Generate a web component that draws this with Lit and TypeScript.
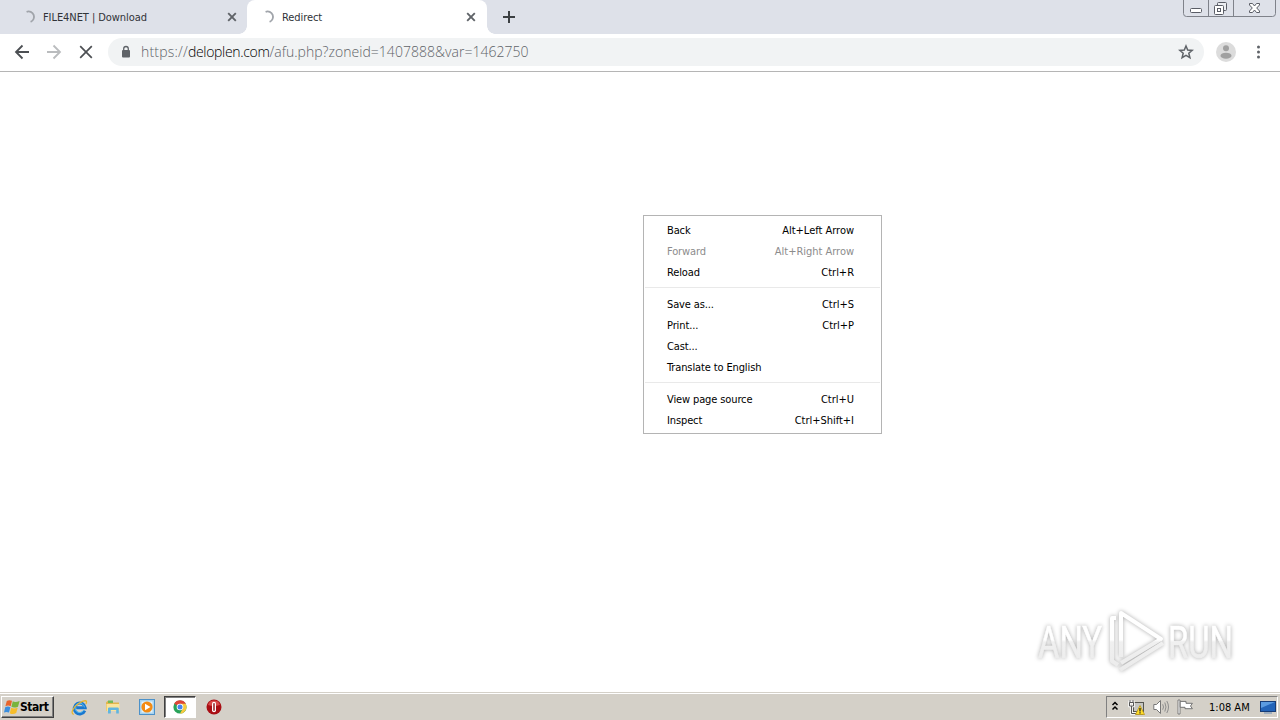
import { LitElement, html, css, svg, nothing } from 'lit';
import { customElement, property } from 'lit/decorators.js';
import { classMap } from 'lit/directives/class-map.js';

interface MenuEntry {
  label: string;
  keys?: string;
  disabled?: boolean;
}

const MENU: MenuEntry[][] = [
  [
    { label: 'Back', keys: 'Alt+Left Arrow' },
    { label: 'Forward', keys: 'Alt+Right Arrow', disabled: true },
    { label: 'Reload', keys: 'Ctrl+R' },
  ],
  [
    { label: 'Save as...', keys: 'Ctrl+S' },
    { label: 'Print...', keys: 'Ctrl+P' },
    { label: 'Cast...' },
    { label: 'Translate to English' },
  ],
  [
    { label: 'View page source', keys: 'Ctrl+U' },
    { label: 'Inspect', keys: 'Ctrl+Shift+I' },
  ],
];

@customElement('browser-tab')
class BrowserTab extends LitElement {
  @property() label = '';
  @property({ type: Boolean, reflect: true }) active = false;

  static styles = css`
    :host {
      display: flex;
      align-items: center;
      box-sizing: border-box;
      width: 247px;
      height: 34px;
      padding: 0 9px 0 22px;
      color: #303338;
      font: 11px 'DejaVu Sans Condensed', 'DejaVu Sans', sans-serif;
      letter-spacing: -0.07px;
    }
    :host([active]) {
      width: 240px;
      padding: 0 10px 0 14px;
      background: #fff;
      border-radius: 8px 8px 0 0;
      position: relative;
    }
    /* curved feet of the selected tab */
    :host([active])::before,
    :host([active])::after {
      content: '';
      position: absolute;
      bottom: 0;
      width: 8px;
      height: 8px;
    }
    :host([active])::before {
      left: -8px;
      background: radial-gradient(circle at 0 0, #dee1e9 7.5px, #fff 8px);
    }
    :host([active])::after {
      right: -8px;
      background: radial-gradient(circle at 100% 0, #dee1e9 7.5px, #fff 8px);
    }
    .label {
      flex: 1;
      margin-left: 6px;
      white-space: nowrap;
    }
    svg {
      display: block;
    }
  `;

  render() {
    return html`
      <svg width="15" height="16" viewBox="0 0 15 16" fill="none" stroke="#a0a4aa" stroke-width="1.8">
        <path d="M4.6 2.8A5.4 5.4 0 1 1 8.6 12.9" />
      </svg>
      <span class="label">${this.label}</span>
      <svg width="12" height="12" viewBox="0 0 12 12" stroke="#5f6368" stroke-width="1.9">
        <path d="M2.2 2.2L9.8 9.8M9.8 2.2L2.2 9.8" />
      </svg>
    `;
  }
}

@customElement('context-menu')
class ContextMenu extends LitElement {
  static styles = css`
    :host {
      display: block;
      box-sizing: border-box;
      width: 239px;
      height: 219px;
      padding: 4px 0;
      background: #fff;
      border: 1px solid #b4b4b4;
      color: #000;
      font: 11px 'DejaVu Sans Condensed', 'DejaVu Sans', sans-serif;
      letter-spacing: -0.12px;
    }
    .item {
      display: flex;
      justify-content: space-between;
      height: 21px;
      line-height: 21px;
      padding: 0 27px 0 23px;
    }
    .keys {
      letter-spacing: -0.02px;
    }
    .disabled {
      color: #8c8c8c;
    }
    .separator {
      height: 1px;
      margin: 4px 1px 6px;
      background: #e9e9e9;
    }
  `;

  render() {
    return MENU.map(
      (group, i) => html`
        ${i ? html`<div class="separator"></div>` : nothing}
        ${group.map(
          (item) => html`
            <div class=${classMap({ item: true, disabled: !!item.disabled })}>
              <span>${item.label}</span><span class="keys">${item.keys ?? ''}</span>
            </div>
          `
        )}
      `
    );
  }
}

@customElement('task-bar')
class TaskBar extends LitElement {
  static styles = css`
    :host {
      display: flex;
      box-sizing: border-box;
      height: 28px;
      padding: 3px 2px 1px 1px;
      background: #d4d0c8;
      border-top: 1px solid #d4d0c8;
      box-shadow: inset 0 1px #fff;
      color: #000;
      font: 11px 'DejaVu Sans Condensed', 'DejaVu Sans', sans-serif;
    }
    svg {
      display: block;
      flex: none;
    }
    .start {
      display: flex;
      align-items: center;
      box-sizing: border-box;
      width: 53px;
      height: 22px;
      padding-left: 2px;
      border: 1px solid;
      border-color: #fff #404040 #404040 #fff;
      box-shadow: inset -1px -1px #808080;
      font-weight: bold;
      font-size: 12px;
      letter-spacing: -0.45px;
    }
    .apps {
      display: flex;
      gap: 1.7px;
      margin-left: 9.4px;
    }
    .app {
      display: flex;
      align-items: center;
      justify-content: center;
      box-sizing: border-box;
      width: 32px;
      height: 22px;
    }
    .running {
      background: #fff;
      border: 1px solid;
      border-color: #404040 #fff #fff #404040;
      box-shadow: inset 1px 1px #808080;
    }
    .tray {
      display: flex;
      align-items: center;
      box-sizing: border-box;
      width: 172px;
      height: 22px;
      margin-left: auto;
      padding-left: 4px;
      border: 1px solid;
      border-color: #808080 #fff #fff #808080;
    }
    .icons {
      display: flex;
      align-items: center;
      gap: 7px;
      width: 98px;
    }
    .icons svg:first-child {
      margin-right: 2px;
    }
    .clock {
      width: 51px;
      white-space: nowrap;
    }
  `;

  render() {
    return html`
      <div class="start">
        <svg width="16" height="16" viewBox="0 0 16 16">
          <path d="M2.8 2Q5 .5 8 1.8L6.7 7.2Q4 6 1.4 7.3Z" fill="#e8642a" />
          <path d="M8.8 2.3Q11 4 15.6 2L14 7.7Q10 9.4 7.4 7.8Z" fill="#79b43c" />
          <path d="M1.2 8.2Q4 7 6.4 8.2L5 13.6Q2.5 12.3 0 13.4Z" fill="#3b8ede" />
          <path d="M7.2 8.8Q10 10.3 13.7 8.7L12.2 14Q9 16 5.8 14.2Z" fill="#f6bd2b" />
        </svg>
        <span>Start</span>
      </div>
      <div class="apps">
        <div class="app">
          <svg width="17" height="17" viewBox="0 0 17 17" fill="none">
            <path d="M13.8 11.6A5.5 5.5 0 1 1 14.2 8.8H5.2" stroke="#1a78cf" stroke-width="3" />
            <path d="M12.8 11.2A4.7 4.7 0 1 1 13.4 8.4" stroke="#55bdf0" stroke-width="1" />
            <path d="M2.8 15.4C-1 14.7 2 8 8 4.2C13 1 17 .6 15 5" stroke="#e8b62f" stroke-width="1.3" />
          </svg>
        </div>
        <div class="app">
          <svg width="16" height="16" viewBox="0 0 16 16">
            <path d="M1 3.5L2.5 2H6L7 3.4H14V12H1Z" fill="#e2b54c" />
            <path d="M3 1.5H8V4H3Z" fill="#74b956" />
            <path d="M1.5 5H14.5V12H1.5Z" fill="#fae49b" />
            <path d="M3 14.5V9.5Q3 8.4 4.2 8.4H12.6Q13.8 8.4 13.8 9.5V14.5H11.2V11H5.8V14.5Z" fill="#61b5df" />
          </svg>
        </div>
        <div class="app">
          <svg width="16" height="16" viewBox="0 0 16 16">
            <rect x=".5" y=".5" width="15" height="15" fill="#a7d3ef" stroke="#4c91c9" />
            <rect x="2.5" y="2.5" width="11" height="11" fill="#e6f3fa" />
            <circle cx="8" cy="8" r="5.6" fill="#f38b13" />
            <path d="M6 4.7L11.5 8L6 11.3Z" fill="#fff" />
          </svg>
        </div>
        <div class="app running">
          <svg width="14" height="14" viewBox="0 0 14 14">
            <circle cx="7" cy="7" r="6.6" fill="#29a35a" />
            <path d="M7 7L1.25 3.7A6.6 6.6 0 0 1 12.75 3.7Z" fill="#df4537" />
            <path d="M7 3.7H12.7A6.6 6.6 0 0 1 7 13.6L9.8 8.6Z" fill="#f8ca3e" />
            <circle cx="7" cy="7" r="3.3" fill="#fff" />
            <circle cx="7" cy="7" r="2.5" fill="#4585ee" />
          </svg>
        </div>
        <div class="app">
          <svg width="16" height="16" viewBox="0 0 16 16">
            <circle cx="8" cy="8" r="7.5" fill="#a90e14" />
            <path d="M2 6A6.3 6.3 0 0 1 14 6Q8 8 2 6Z" fill="#d94a49" />
            <rect x="6" y="2.8" width="4" height="10.4" rx="2" fill="#fff" />
            <rect x="7.3" y="4" width="1.4" height="8" rx=".7" fill="#8d0c12" />
          </svg>
        </div>
      </div>
      <div class="tray">
        <div class="icons">
          <svg width="8" height="12" viewBox="0 0 8 12" fill="none" stroke="#000" stroke-width="1.5">
            <path d="M1.5 4L4 1.5L6.5 4M1.5 8.5L4 6L6.5 8.5" />
          </svg>
          <svg width="18" height="17" viewBox="0 0 18 17" fill="none">
            <rect x="5.5" y="3.5" width="10" height="9" fill="#c6c6c2" stroke="#55554f" />
            <path d="M7 15.5H15" stroke="#777" />
            <path d="M2 1V4M5 1V4M1.5 3.5H5.5V7H1.5ZM3.5 7V14.5H8" stroke="#fff" stroke-width="2.4" />
            <path d="M2 1V4M5 1V4M1.5 3.5H5.5V7H1.5ZM3.5 7V14.5H8" stroke="#555" />
            <path d="M12 6.5L16.5 15.5H7.5Z" fill="#ffdc28" stroke="#b9951b" stroke-width=".8" />
            <path d="M12 9V12.4M12 13.2V14.5" stroke="#222" stroke-width="1.3" />
          </svg>
          <svg width="17" height="16" viewBox="0 0 17 16" fill="none">
            <path d="M.8 5.5H3.5L7.5 1.5V14.5L3.5 10.5H.8Z" fill="#fff" stroke="#777" />
            <path d="M9.7 5.3Q11.3 8 9.7 10.7M11.8 3.5Q14.2 8 11.8 12.5M13.8 2Q17.2 8 13.8 14" stroke="#8d8d8d" />
          </svg>
          <svg width="17" height="16" viewBox="0 0 17 16">
            <path d="M1 1H3V15H1Z" fill="#fff" stroke="#666" stroke-width=".8" />
            <path d="M3.2 2.4H9V4.3H15.4L13.5 7L15.4 9.7H8V8.3H3.2Z" fill="#fff" stroke="#666" stroke-width=".9" />
          </svg>
        </div>
        <span class="clock">1:08 AM</span>
        <svg width="16" height="16" viewBox="0 0 16 16">
          <rect x=".5" y="2.5" width="15" height="10" fill="#2364b8" stroke="#173c76" />
          <path d="M1 3H15L1 9Z" fill="#5b9be0" />
          <path d="M4 14H12" stroke="#6a8cb5" />
        </svg>
      </div>
    `;
  }
}

@customElement('app-root')
class AppRoot extends LitElement {
  static styles = css`
    :host {
      display: flex;
      flex-direction: column;
      width: 1280px;
      height: 720px;
      overflow: hidden;
      background: #fff;
      position: relative;
    }
    svg {
      display: block;
      flex: none;
    }
    .tabs {
      display: flex;
      height: 34px;
      background: #dee1e9;
    }
    .new-tab {
      margin: 10px 0 0 15px;
    }
    .caption {
      margin-left: auto;
      margin-right: 4px;
    }
    .toolbar {
      display: flex;
      align-items: center;
      box-sizing: border-box;
      height: 38px;
      padding: 0 14px 1px;
      border-bottom: 1px solid #b5b5b5;
    }
    .nav {
      display: flex;
      gap: 16px;
    }
    .omnibox {
      display: flex;
      align-items: center;
      box-sizing: border-box;
      width: 1096px;
      height: 28px;
      margin-left: 14px;
      padding: 0 10px 0 12px;
      border-radius: 14px;
      background: #f1f3f4;
    }
    .url {
      flex: 1;
      margin-left: 9px;
      padding-bottom: 2px;
      color: #5f6368;
      font: 300 14px 'Open Sans', sans-serif;
      letter-spacing: 0.03px;
    }
    .scheme {
      letter-spacing: 0.2px;
    }
    .host {
      color: #000;
      letter-spacing: -0.33px;
    }
    .avatar {
      margin: 0 14px 0 12px;
    }
    .page {
      flex: 1;
    }
    context-menu {
      position: absolute;
      left: 643px;
      top: 215px;
    }
    .watermark {
      position: absolute;
      left: 1030px;
      top: 601px;
      filter: drop-shadow(0 0 2px #aaa);
    }
    .watermark text {
      font: 44px 'Roboto', sans-serif;
    }
  `;

  watermark() {
    return svg`
      <defs>
        <linearGradient id="shade" x1="0" y1="0" x2="0" y2="76" gradientUnits="userSpaceOnUse">
          <stop offset=".51" stop-color="#fff" />
          <stop offset=".54" stop-color="#f0f0f0" />
          <stop offset="1" stop-color="#eaeaea" />
        </linearGradient>
      </defs>
      <g fill="url(#shade)" stroke="url(#shade)" stroke-width=".6">
        <text x="8" y="57" textLength="64" lengthAdjust="spacingAndGlyphs">ANY</text>
        <text x="138" y="57" textLength="65" lengthAdjust="spacingAndGlyphs">RUN</text>
      </g>
      <g fill="none" stroke="url(#shade)" stroke-width="4" stroke-linejoin="round">
        <path d="M91 56V12L131 38L91 62" />
        <path d="M86 17H82V60L88 64" />
        <path d="M90 69L133 42" />
      </g>
    `;
  }

  render() {
    return html`
      <div class="tabs">
        <browser-tab label="FILE4NET | Download"></browser-tab>
        <browser-tab label="Redirect" active></browser-tab>
        <svg class="new-tab" width="14" height="14" viewBox="0 0 14 14" stroke="#3c4043" stroke-width="2">
          <path d="M7 1V13M1 7H13" />
        </svg>
        <svg class="caption" width="93" height="17" viewBox="0 0 93 17" fill="none" stroke="#7f828a">
          <path d="M.5 0V13.5Q.5 16.5 3.5 16.5H89.5Q92.5 16.5 92.5 13.5V0M25.5 0V16M50.5 0V16" />
          <g stroke="#5a5d66">
            <rect x="7.5" y="8.5" width="11" height="4" rx="1" fill="#fff" />
            <rect x="34.5" y="2.5" width="9" height="8" rx="1" fill="#eceef2" />
            <rect x="31.5" y="5.5" width="9" height="9" rx="1" fill="#fff" />
            <rect x="34.5" y="8.5" width="3" height="3" />
            <path
              d="M66.5 3.5H69.5L71.5 6L73.5 3.5H76.5V5L73.7 8L76.5 11V12.5H73.5L71.5 10L69.5 12.5H66.5V11L69.3 8L66.5 5Z"
              fill="#fff"
            />
          </g>
        </svg>
      </div>
      <div class="toolbar">
        <div class="nav">
          <svg width="16" height="16" viewBox="0 0 16 16" fill="none" stroke="#4c4f53" stroke-width="1.8">
            <path d="M15 8H2.5M8.5 1.5L2 8L8.5 14.5" />
          </svg>
          <svg width="16" height="16" viewBox="0 0 16 16" fill="none" stroke="#babcbe" stroke-width="1.8">
            <path d="M1 8H13.5M7.5 1.5L14 8L7.5 14.5" />
          </svg>
          <svg width="16" height="16" viewBox="0 0 16 16" fill="none" stroke="#4c4f53" stroke-width="1.7">
            <path d="M2.2 2.2L13.8 13.8M13.8 2.2L2.2 13.8" />
          </svg>
        </div>
        <div class="omnibox">
          <svg width="12" height="14" viewBox="0 0 12 14">
            <rect x="2" y="5" width="8" height="7.5" rx="1" fill="#5f6368" />
            <path d="M3.7 5.5V3.8A2.3 2.3 0 0 1 8.3 3.8V5.5" fill="none" stroke="#5f6368" stroke-width="1.3" />
          </svg>
          <span class="url"
            ><span class="scheme">https://</span><span class="host">deloplen.com</span>/afu.php?zoneid=1407888&amp;var=1462750</span
          >
          <svg width="16" height="16" viewBox="0 0 16 16" fill="none" stroke="#5f6368" stroke-width="1.5">
            <path d="M8 2L9.7 6.1L14.2 6.4L10.8 9.3L11.9 13.6L8 11.3L4.1 13.6L5.2 9.3L1.8 6.4L6.3 6.1Z" />
          </svg>
        </div>
        <svg class="avatar" width="20" height="20" viewBox="0 0 20 20">
          <circle cx="10" cy="10" r="10" fill="#dcdcdc" />
          <circle cx="10" cy="6.3" r="3" fill="#a0a0a0" />
          <ellipse cx="10" cy="13.7" rx="5.5" ry="3" fill="#a0a0a0" />
        </svg>
        <svg width="16" height="16" viewBox="0 0 16 16" fill="#5f6368">
          <circle cx="8.5" cy="3" r="1.5" />
          <circle cx="8.5" cy="8" r="1.5" />
          <circle cx="8.5" cy="13" r="1.5" />
        </svg>
      </div>
      <div class="page"></div>
      <task-bar></task-bar>
      <context-menu></context-menu>
      <svg class="watermark" width="245" height="76" viewBox="0 0 245 76">${this.watermark()}</svg>
    `;
  }
}
